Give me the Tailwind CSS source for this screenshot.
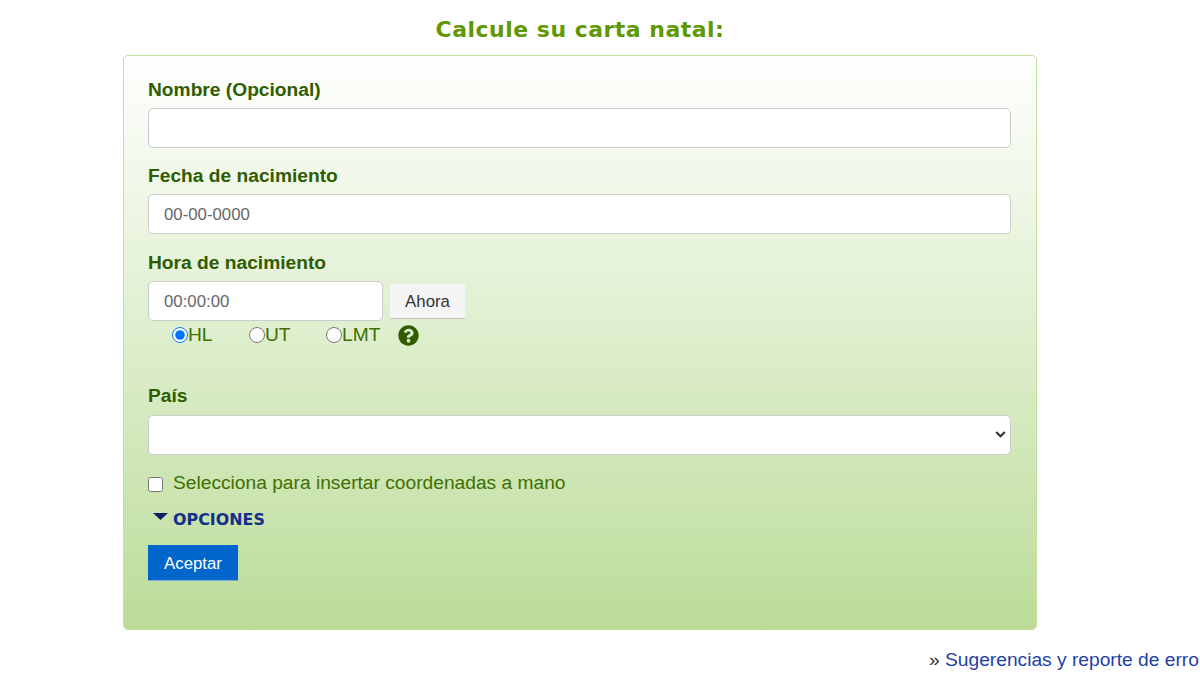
<!DOCTYPE html>
<html lang="es">
<head>
  <meta charset="UTF-8" />
  <title>Carta natal</title>
  <script src="https://cdn.jsdelivr.net/npm/@tailwindcss/browser@4"></script>
</head>
<body class="bg-white h-[675px] w-[1200px] overflow-hidden font-['Liberation_Sans',Arial,sans-serif]">

  <div class="ml-[123px] w-[914px]">
    <h1 class="h-[55px] pt-[15px] text-center font-['DejaVu_Sans',sans-serif] font-bold text-[22px] leading-[30px] tracking-[0.48px] text-[#5f9800]">Calcule su carta natal:</h1>

    <form class="h-[575px] border border-[#bfe09a] rounded-[5px] bg-gradient-to-b from-white to-[#bcdc98] pl-[24px] pr-[25px] pt-[22px]">
      <!-- nombre -->
      <label class="block h-[30px] text-[19.2px] leading-[24px] font-bold text-[#2f5c00]">Nombre (Opcional)</label>
      <input type="text" class="block w-full h-[40px] bg-white border border-[#cccccc] rounded-[5px] px-[15px] pt-[2px] text-[16.8px]" />

      <!-- fecha -->
      <label class="block h-[30px] mt-[16px] text-[19.2px] leading-[24px] font-bold text-[#2f5c00]">Fecha de nacimiento</label>
      <input type="text" placeholder="00-00-0000" class="block w-full h-[40px] bg-white border border-[#cccccc] rounded-[5px] px-[15px] pt-[2px] text-[16.8px] placeholder:text-[#666666]" />

      <!-- hora -->
      <label class="block h-[30px] mt-[17px] text-[19.2px] leading-[24px] font-bold text-[#2f5c00]">Hora de nacimiento</label>
      <div class="flex items-center gap-[7px]">
        <input type="text" placeholder="00:00:00" class="block w-[235px] h-[40px] bg-white border border-[#cccccc] rounded-[5px] px-[15px] pt-[2px] text-[16.8px] placeholder:text-[#666666]" />
        <button type="button" class="w-[75px] h-[35px] pt-[2px] bg-[#f5f5f5] border-b border-[#c4c4c4] text-[16.8px] text-[#333333]">Ahora</button>
      </div>
      <div class="flex items-center h-[28px] pl-[24px] text-[19.2px] text-[#3f7000]">
        <label class="flex items-center w-[77px]"><input type="radio" name="tz" checked class="w-[16px] h-[16px] m-0 accent-[#0075ff]" />HL</label>
        <label class="flex items-center w-[77px]"><input type="radio" name="tz" class="w-[16px] h-[16px] m-0" />UT</label>
        <label class="flex items-center w-[72px]"><input type="radio" name="tz" class="w-[16px] h-[16px] m-0" />LMT</label>
        <svg class="w-[21px] h-[21px]" viewBox="0 0 512 512"><path fill="#2f5c00" d="M504 256c0 137-111 248-248 248S8 393 8 256 119 8 256 8s248 111 248 248zM262.7 90c-54.5 0-89.3 23-116.5 63.8-3.5 5.3-2.4 12.4 2.7 16.3l34.7 26.3c5.2 3.9 12.6 3 16.7-2.1 17.9-22.7 30.1-35.8 57.3-35.8 20.4 0 45.7 13.1 45.7 32.9 0 15-12.4 22.7-32.5 34-23.5 13.2-54.6 29.6-54.6 70.7V300c0 6.6 5.4 12 12 12h56c6.6 0 12-5.4 12-12v-1.3c0-28.5 83.2-29.6 83.2-106.7 0-58-60.2-102-116.5-102zM256 338c-25.4 0-46 20.6-46 46s20.6 46 46 46 46-20.6 46-46-20.6-46-46-46z"/></svg>
      </div>

      <!-- pais -->
      <label class="block h-[31px] mt-[35px] text-[19.2px] leading-[24px] font-bold text-[#2f5c00]">País</label>
      <div class="relative">
        <select class="block w-full h-[40px] bg-white border border-[#cccccc] rounded-[5px] appearance-none"></select>
        <svg class="absolute right-[5px] top-[15px] w-[11px] h-[9px]" viewBox="0 0 11 9"><path d="M1.2 2l4.3 4.3L9.8 2" fill="none" stroke="#333333" stroke-width="2"/></svg>
      </div>

      <label class="flex items-center h-[28px] mt-[14px] text-[19.2px] text-[#3f7000]">
        <input type="checkbox" class="w-[15px] h-[15px] m-0 mr-[10px] mt-[3px]" />Selecciona para insertar coordenadas a mano
      </label>

      <div class="flex items-center h-[20px] mt-[12px] pl-[5px] pt-[2px] font-['DejaVu_Sans',sans-serif] font-bold text-[15.9px] text-[#14308c]">
        <svg class="w-[15px] h-[7px] mr-[5px] mb-[8px]" viewBox="0 0 15 7"><path d="M0 0h15L7.5 7z" fill="#0f1f66"/></svg>OPCIONES
      </div>

      <button type="button" class="block mt-[16px] w-[90px] h-[36px] pt-[2px] bg-[#0066cc] border-b border-[#7fa9d9] text-white text-[16.8px]">Aceptar</button>
    </form>
  </div>

  <p class="mt-[18px] ml-[929px] whitespace-nowrap text-[19.2px] leading-[24px] text-[#333333]">» <a href="#" class="text-[#1f3fa6]">Sugerencias y reporte de erro</a></p>

</body>
</html>
